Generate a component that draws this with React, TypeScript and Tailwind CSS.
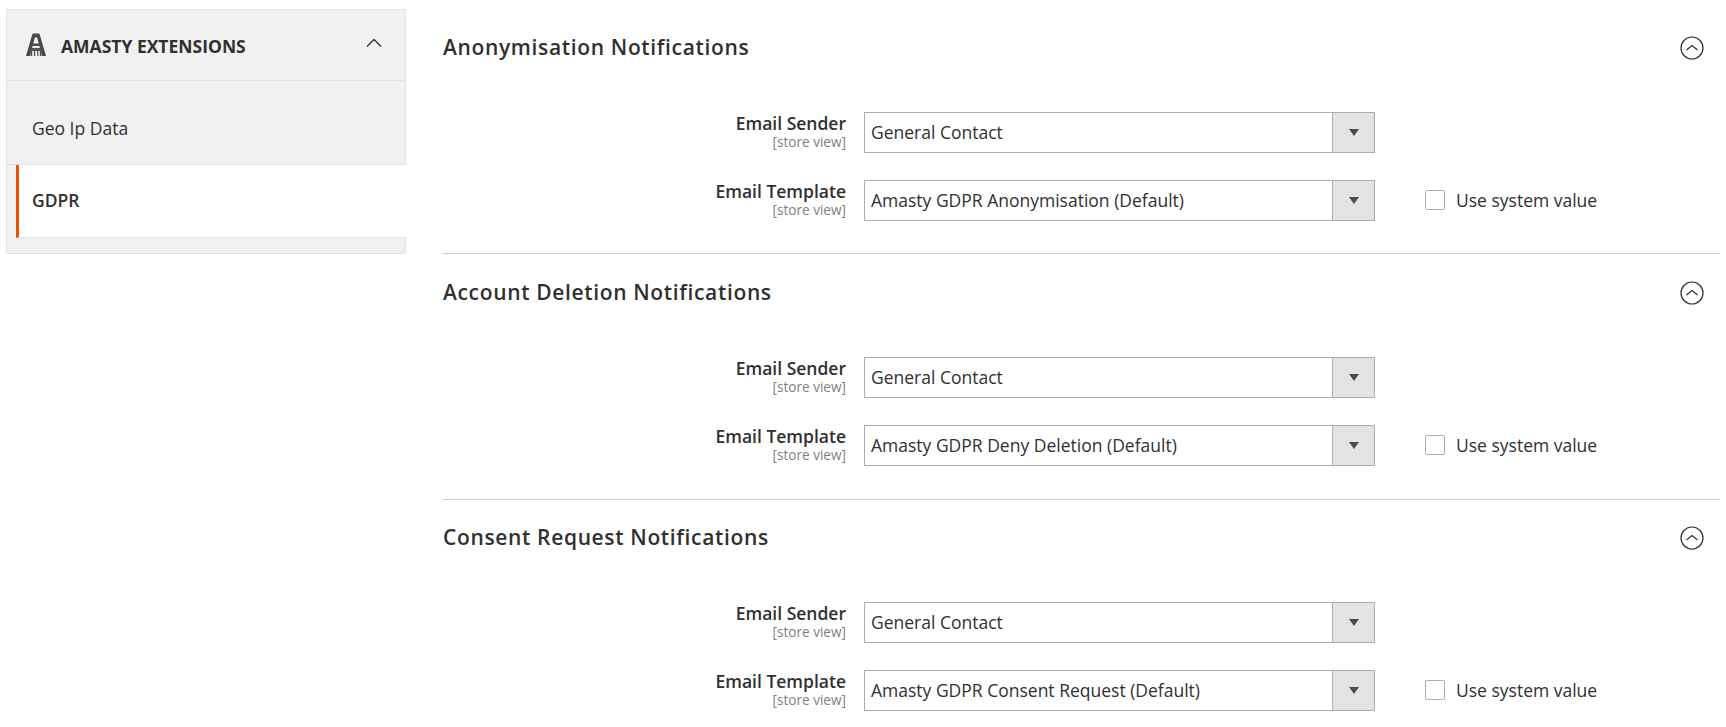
const font = { fontFamily: '"Open Sans", sans-serif' };

function LogoA() {
  return (
    <svg width="20" height="24" viewBox="0 0 20 24" className="shrink-0">
      <path d="M6.6 0.5h6.8L20 23h-4L11.2 4.6H8.8L4 23H0z" fill="#484848" />
      <path d="M6 10.5h8v2.4H6z" fill="#484848" />
      <path d="M4.6 15h10.8v8h-1.6v-5h-1.5v5h-1.2v-5H9.2v5H7.9v-5H6.2v5H4.6z" fill="#555555" />
    </svg>
  );
}

function Select({ value }: { value: string }) {
  return (
    <div className="flex h-[41px] w-[511px] border border-[#adadad] bg-white">
      <div className="flex flex-1 items-center pl-[6px] text-[17.5px] text-[#303030]">{value}</div>
      <div className="flex w-[42px] items-center justify-center border-l border-[#adadad] bg-[#e3e3e3]">
        <svg width="10" height="7" viewBox="0 0 10 7"><path d="M0 0h10L5 7z" fill="#514943" /></svg>
      </div>
    </div>
  );
}

function Label({ text }: { text: string }) {
  return (
    <div className="w-[421px] pr-[18px] text-right">
      <div className="text-[17.5px] font-semibold leading-[22px] text-[#303030]">{text}</div>
      <div className="text-[13.6px] leading-[15px] text-[#808080]">[store view]</div>
    </div>
  );
}

function Section({ title, template, className }: { title: string; template: string; className: string }) {
  return (
    <section className={className}>
      <div className="flex h-[103px] items-start justify-between pt-[24px]">
        <h2 className="text-[21px] font-semibold leading-[28px] tracking-[0.65px] text-[#303030]">{title}</h2>
        <svg width="24" height="24" viewBox="0 0 24 24" className="mr-[16px] mt-[3px]" fill="none" stroke="#303030">
          <circle cx="12" cy="12" r="11" strokeWidth="1.2" />
          <path d="M6.5 14L12 9.5L17.5 14" strokeWidth="1.3" />
        </svg>
      </div>
      <div className="flex flex-col gap-[27px]">
        <div className="flex items-start">
          <Label text="Email Sender" />
          <Select value="General Contact" />
        </div>
        <div className="flex items-start">
          <Label text="Email Template" />
          <Select value={template} />
          <label className="ml-[50px] flex h-[41px] items-center pb-[1px]">
            <span className="h-[20px] w-[20px] rounded-[2px] border border-[#adadad] bg-white" />
            <span className="ml-[11px] text-[17.5px] text-[#303030]">Use system value</span>
          </label>
        </div>
      </div>
    </section>
  );
}

export default function App() {
  return (
    <div className="flex h-[727px] w-[1726px] overflow-hidden bg-white" style={font}>
      <aside className="ml-[6px] mt-[9px] h-[245px] w-[400px] border border-[#e3e3e3] bg-[#f1f1f1]">
        <div className="flex h-[71px] items-center border-b border-[#e3e3e3] pl-[19px] pr-[23px]">
          <LogoA />
          <span className="ml-[15px] flex-1 pt-[2px] text-[17.5px] font-bold text-[#303030]">AMASTY EXTENSIONS</span>
          <svg width="16" height="10" viewBox="0 0 16 10" fill="none" stroke="#303030" strokeWidth="1.3" className="mb-[4px]"><path d="M1 8.5L8 1.5L15 8.5" /></svg>
        </div>
        <div className="flex h-[84px] items-center border-b border-[#e3e3e3] pl-[25px] pt-[11px] text-[17.5px] text-[#303030]">Geo Ip Data</div>
        <div className="-mr-[1px] ml-[9px] flex h-[73px] items-center border-b border-[#e3e3e3] border-l-[3px] border-l-[#eb5202] bg-white pb-[2px] pl-[13px] text-[17.5px] font-semibold text-[#303030]">GDPR</div>
      </aside>
      <main className="ml-[37px] mt-[9px] w-[1277px]">
        <Section className="border-b border-[#cccccc] pb-[32px]" title="Anonymisation Notifications" template="Amasty GDPR Anonymisation (Default)" />
        <Section className="border-b border-[#cccccc] pb-[33px]" title="Account Deletion Notifications" template="Amasty GDPR Deny Deletion (Default)" />
        <Section className="-mt-[1px]" title="Consent Request Notifications" template="Amasty GDPR Consent Request (Default)" />
      </main>
    </div>
  );
}
